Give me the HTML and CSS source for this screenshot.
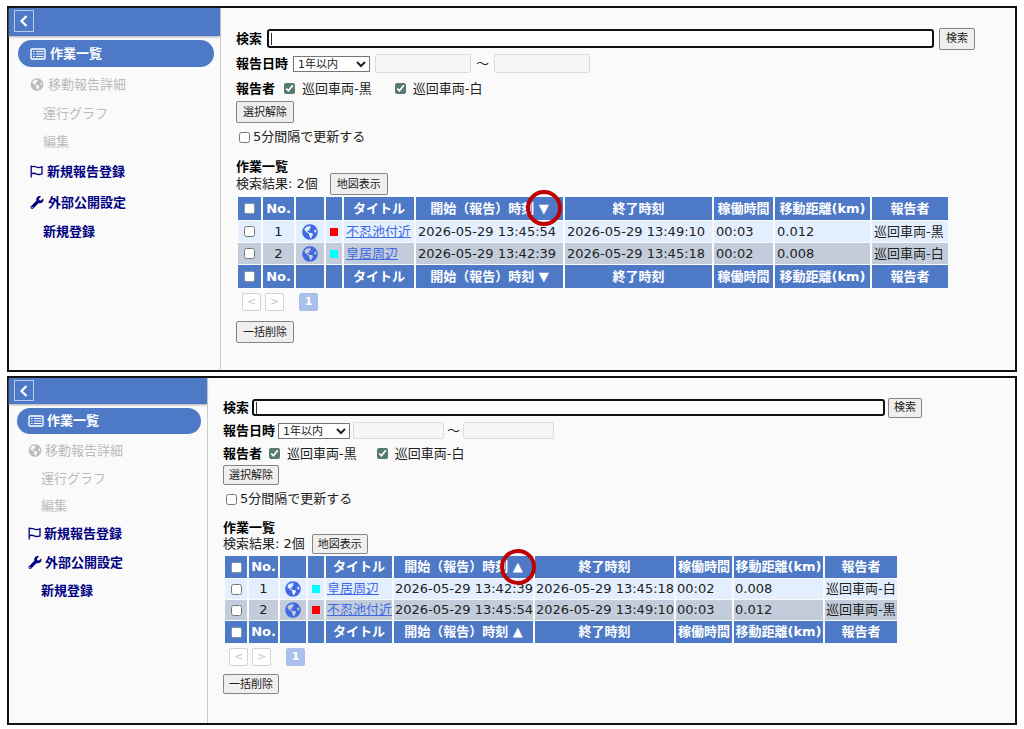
FILE: index.html
```html
<!DOCTYPE html>
<html lang="ja">
<head>
    <meta charset="UTF-8">
    <meta name="viewport" content="width=device-width, initial-scale=1.0">
    <title>作業一覧</title>
    <link rel="stylesheet" href="styles.css">
</head>
<body>
    <svg class="sprite" aria-hidden="true">
        <symbol id="i-back" viewBox="0 0 12 12"><path d="M8.500 1 3.500 6l5 5" fill="none" stroke="currentColor" stroke-width="2.2"/></symbol>
        <symbol id="i-list" viewBox="0 0 16 12"><rect x="1" y="1" width="14" height="10" rx="1" fill="none" stroke="currentColor" stroke-width="1.4"/><path d="M3 3.5h1.6M6 3.5h7.5M3 6h1.6M6 6h7.5M3 8.5h1.6M6 8.5h7.5" stroke="currentColor" stroke-width="1.2"/></symbol>
        <symbol id="i-globe" viewBox="0 0 496 512"><path fill="currentColor" d="M248 8C111.03 8 0 119.03 0 256s111.03 248 248 248 248-111.03 248-248S384.97 8 248 8zm82.29 357.6c-3.9 3.88-7.99 7.95-11.31 11.28-2.99 3-5.1 6.7-6.17 10.71-1.51 5.66-2.73 11.38-4.77 16.87l-17.39 46.85c-13.76 3-28 4.69-42.65 4.69v-27.38c1.69-12.62-7.64-36.26-22.63-51.25-6-6-9.37-14.14-9.37-22.63v-32.01c0-11.64-6.27-22.34-16.46-27.97-14.37-7.95-34.81-19.06-48.81-26.11-11.48-5.78-22.1-13.14-31.65-21.75l-.8-.72a114.792 114.792 0 0 1-18.06-20.74c-9.38-13.77-24.66-36.42-34.59-51.14 20.47-45.5 57.36-82.04 103.2-101.89l24.01 12.01C203.48 89.74 216 82.01 216 70.11v-11.3c7.99-1.29 16.12-2.11 24.39-2.42l28.3 28.3c6.25 6.25 6.25 16.38 0 22.63L264 112l-10.34 10.34c-3.12 3.12-3.12 8.19 0 11.31l4.69 4.69c3.12 3.12 3.12 8.19 0 11.31l-8 8a8.008 8.008 0 0 1-5.66 2.34h-8.99c-2.08 0-4.08.81-5.58 2.27l-9.92 9.65a8.008 8.008 0 0 0-1.58 9.31l15.59 31.19c2.66 5.32-1.21 11.58-7.15 11.58h-5.64c-1.93 0-3.79-.7-5.24-1.96l-9.28-8.06a16.017 16.017 0 0 0-15.55-3.1l-31.17 10.39a11.95 11.95 0 0 0-8.17 11.34c0 4.53 2.56 8.66 6.61 10.69l11.08 5.54c9.41 4.71 19.79 7.16 30.31 7.16s22.59 27.29 32 32h66.75c8.49 0 16.62 3.37 22.63 9.37l13.69 13.69a30.503 30.503 0 0 1 8.93 21.57 46.536 46.536 0 0 1-13.72 32.98zM417 274.25c-5.79-1.45-10.84-5-14.15-9.97l-17.98-26.97a23.97 23.97 0 0 1 0-26.62l19.59-29.38c2.32-3.47 5.5-6.29 9.24-8.15l12.98-6.49C440.2 193.59 448 223.87 448 256c0 8.67-.74 17.16-1.82 25.54L417 274.25z"/></symbol>
        <symbol id="i-flag" viewBox="0 0 13 13"><path d="M1.2 0.5v12M1.2 2c2.2-1.4 3.6-.7 5 0s3 1 5.8-.2v7c-2.8 1.2-4.4.8-5.8.1s-2.8-1.2-5 .1" fill="none" stroke="currentColor" stroke-width="1.3"/></symbol>
        <symbol id="i-wrench" viewBox="0 0 512 512"><path fill="currentColor" d="M507.73 109.1c-2.24-9.03-13.54-12.09-20.12-5.51l-74.36 74.36-67.88-11.31-11.31-67.88 74.36-74.36c6.62-6.62 3.43-17.9-5.66-20.16-47.38-11.74-99.55.91-136.58 37.93-39.64 39.64-50.55 97.1-34.05 147.2L18.74 402.76c-24.99 24.99-24.99 65.51 0 90.5 24.99 24.99 65.51 24.99 90.5 0l213.21-213.21c50.12 16.71 107.47 5.68 147.37-34.22 37.07-37.07 49.7-89.32 37.91-136.73zM64 472c-13.25 0-24-10.75-24-24 0-13.26 10.75-24 24-24s24 10.74 24 24c0 13.25-10.75 24-24 24z"/></symbol>
    </svg>

    <!-- 開始時刻の降順 -->
    <section class="panel desc">
        <nav class="side">
            <div class="side-head"><button type="button" class="back" aria-label="戻る"><svg><use href="#i-back"/></svg></button></div>
            <ul class="menu">
                <li class="active"><a href="#"><svg class="wide"><use href="#i-list"/></svg>作業一覧</a></li>
                <li class="off"><a href="#"><svg><use href="#i-globe"/></svg>移動報告詳細</a></li>
                <li class="sub off"><a href="#">運行グラフ</a></li>
                <li class="sub off"><a href="#">編集</a></li>
                <li><a href="#"><svg class="narrow"><use href="#i-flag"/></svg>新規報告登録</a></li>
                <li><a href="#"><svg><use href="#i-wrench"/></svg>外部公開設定</a></li>
                <li class="sub"><a href="#">新規登録</a></li>
            </ul>
        </nav>
        <main class="content">
            <form>
                <div class="row search">
                    <label for="q1">検索</label>
                    <input type="text" id="q1">
                    <button type="button">検索</button>
                </div>
                <div class="row">
                    <label for="term1">報告日時</label>
                    <select id="term1"><option>1年以内</option></select>
                    <input type="text" class="date" aria-label="開始日" disabled>
                    <span>～</span>
                    <input type="text" class="date" aria-label="終了日" disabled>
                </div>
                <div class="row">
                    <b>報告者</b>
                    <label class="who"><input type="checkbox" checked>巡回車両-黒</label>
                    <label class="who"><input type="checkbox" checked>巡回車両-白</label>
                </div>
                <button type="button">選択解除</button>
                <label class="auto"><input type="checkbox">5分間隔で更新する</label>
            </form>
            <h2>作業一覧</h2>
            <div class="result"><span>検索結果: 2個</span><button type="button">地図表示</button></div>
            <table>
                <colgroup><col class="c-check"><col class="c-no"><col class="c-map"><col class="c-mark"><col class="c-title"><col class="c-start"><col class="c-end"><col class="c-time"><col class="c-km"><col class="c-who"></colgroup>
                <thead>
                    <tr><th><input type="checkbox" aria-label="全選択"></th><th>No.</th><th></th><th></th><th>タイトル</th><th>開始（報告）時刻 <span class="sort circled">▼</span></th><th>終了時刻</th><th>稼働時間</th><th>移動距離(km)</th><th>報告者</th></tr>
                </thead>
                <tbody>
                    <tr><td><input type="checkbox" aria-label="1を選択"></td><td>1</td><td><svg class="globe"><use href="#i-globe"/></svg></td><td><i class="mark red"></i></td><td><a href="#">不忍池付近</a></td><td>2026-05-29 13:45:54</td><td>2026-05-29 13:49:10</td><td>00:03</td><td>0.012</td><td>巡回車両-黒</td></tr>
                    <tr><td><input type="checkbox" aria-label="2を選択"></td><td>2</td><td><svg class="globe"><use href="#i-globe"/></svg></td><td><i class="mark cyan"></i></td><td><a href="#">皇居周辺</a></td><td>2026-05-29 13:42:39</td><td>2026-05-29 13:45:18</td><td>00:02</td><td>0.008</td><td>巡回車両-白</td></tr>
                </tbody>
                <tfoot>
                    <tr><th><input type="checkbox" aria-label="全選択"></th><th>No.</th><th></th><th></th><th>タイトル</th><th>開始（報告）時刻 <span class="sort">▼</span></th><th>終了時刻</th><th>稼働時間</th><th>移動距離(km)</th><th>報告者</th></tr>
                </tfoot>
            </table>
            <div class="pager"><button type="button">&lt;</button><button type="button">&gt;</button><button type="button" class="now">1</button></div>
            <button type="button">一括削除</button>
        </main>
    </section>

    <!-- 開始時刻の昇順 -->
    <section class="panel asc">
        <nav class="side">
            <div class="side-head"><button type="button" class="back" aria-label="戻る"><svg><use href="#i-back"/></svg></button></div>
            <ul class="menu">
                <li class="active"><a href="#"><svg class="wide"><use href="#i-list"/></svg>作業一覧</a></li>
                <li class="off"><a href="#"><svg><use href="#i-globe"/></svg>移動報告詳細</a></li>
                <li class="sub off"><a href="#">運行グラフ</a></li>
                <li class="sub off"><a href="#">編集</a></li>
                <li><a href="#"><svg class="narrow"><use href="#i-flag"/></svg>新規報告登録</a></li>
                <li><a href="#"><svg><use href="#i-wrench"/></svg>外部公開設定</a></li>
                <li class="sub"><a href="#">新規登録</a></li>
            </ul>
        </nav>
        <main class="content">
            <form>
                <div class="row search">
                    <label for="q2">検索</label>
                    <input type="text" id="q2">
                    <button type="button">検索</button>
                </div>
                <div class="row">
                    <label for="term2">報告日時</label>
                    <select id="term2"><option>1年以内</option></select>
                    <input type="text" class="date" aria-label="開始日" disabled>
                    <span>～</span>
                    <input type="text" class="date" aria-label="終了日" disabled>
                </div>
                <div class="row">
                    <b>報告者</b>
                    <label class="who"><input type="checkbox" checked>巡回車両-黒</label>
                    <label class="who"><input type="checkbox" checked>巡回車両-白</label>
                </div>
                <button type="button">選択解除</button>
                <label class="auto"><input type="checkbox">5分間隔で更新する</label>
            </form>
            <h2>作業一覧</h2>
            <div class="result"><span>検索結果: 2個</span><button type="button">地図表示</button></div>
            <table>
                <colgroup><col class="c-check"><col class="c-no"><col class="c-map"><col class="c-mark"><col class="c-title"><col class="c-start"><col class="c-end"><col class="c-time"><col class="c-km"><col class="c-who"></colgroup>
                <thead>
                    <tr><th><input type="checkbox" aria-label="全選択"></th><th>No.</th><th></th><th></th><th>タイトル</th><th>開始（報告）時刻 <span class="sort circled">▲</span></th><th>終了時刻</th><th>稼働時間</th><th>移動距離(km)</th><th>報告者</th></tr>
                </thead>
                <tbody>
                    <tr><td><input type="checkbox" aria-label="1を選択"></td><td>1</td><td><svg class="globe"><use href="#i-globe"/></svg></td><td><i class="mark cyan"></i></td><td><a href="#">皇居周辺</a></td><td>2026-05-29 13:42:39</td><td>2026-05-29 13:45:18</td><td>00:02</td><td>0.008</td><td>巡回車両-白</td></tr>
                    <tr><td><input type="checkbox" aria-label="2を選択"></td><td>2</td><td><svg class="globe"><use href="#i-globe"/></svg></td><td><i class="mark red"></i></td><td><a href="#">不忍池付近</a></td><td>2026-05-29 13:45:54</td><td>2026-05-29 13:49:10</td><td>00:03</td><td>0.012</td><td>巡回車両-黒</td></tr>
                </tbody>
                <tfoot>
                    <tr><th><input type="checkbox" aria-label="全選択"></th><th>No.</th><th></th><th></th><th>タイトル</th><th>開始（報告）時刻 <span class="sort">▲</span></th><th>終了時刻</th><th>稼働時間</th><th>移動距離(km)</th><th>報告者</th></tr>
                </tfoot>
            </table>
            <div class="pager"><button type="button">&lt;</button><button type="button">&gt;</button><button type="button" class="now">1</button></div>
            <button type="button">一括削除</button>
        </main>
    </section>
</body>
</html>
```
FILE: styles.css
```css
*, *::after { box-sizing: border-box; }
body {
    margin: 0;
    padding: 6px 7px 4px;
    min-height: 100vh;
    display: grid;
    grid-template-rows: 366fr 349fr;
    gap: 4px;
    background: #fff;
    color: #222;
    font: 13px/18px "DejaVu Sans", "Noto Sans CJK JP", sans-serif;
}
.sprite { display: none; }

.panel { display: flex; border: 2px solid #111; background: #fafafa; }
.desc {
    --side: 212px; --head: 28px; --pill: 27px; --item: 31px; --sub: 28px; --indent: 9px;
    --btn: 22px; --btn-pad: 6px; --line: 25px; --gap: 15px; --top: 18px; --right: 40px;
    --space: 5px; --who: 14px; --map: 12px; --pager: 10px;
    --date: 96px; --select: 77px; --input: 19px; --th: 23px; --td: 21px; --cell: 2px; --table: 712px;
}
.asc {
    --side: 199px; --head: 26px; --pill: 26px; --item: 29px; --sub: 27px; --indent: 8px;
    --btn: 20px; --btn-pad: 5px; --line: 23px; --gap: 14px; --top: 18px; --right: 93px;
    --space: 3px; --who: 13px; --map: 7px; --pager: 8px;
    --date: 91px; --select: 72px; --input: 17px; --th: 22px; --td: 20px; --cell: 1px; --table: 675px;
}

/* side menu */
.side { flex: none; width: var(--side); border-right: 1px solid #ccc; }
.side-head { height: var(--head); padding: 2px 5px; background: #4d79c7; box-shadow: 0 1px 2px #aaa; }
.back {
    display: block; width: 20px; height: 22px; padding: 4px 3px;
    border: 1px solid #b8cbed; border-radius: 0; background: none; color: #fff;
}
.asc .back { height: 21px; }
.back svg { display: block; width: 12px; height: 12px; }
.menu { list-style: none; margin: 0; padding: 4px 6px 0 var(--indent); }
.menu a {
    display: flex; align-items: center; height: var(--item); padding-left: 12px; gap: 4px;
    color: #000080; font-weight: bold; text-decoration: none;
}
.menu svg { width: 14px; height: 13px; }
.menu .wide { width: 16px; height: 12px; }
.menu .narrow { width: 13px; }
.menu .sub a { height: var(--sub); padding-left: 25px; }
.menu .off a { color: #bbb; font-weight: normal; }
.menu .active a { height: var(--pill); margin-bottom: 2px; border-radius: 14px; background: #4d79c7; color: #fff; }
.asc .menu a { padding-left: 11px; gap: 3px; }
.asc .menu .sub a { padding-left: 24px; }

/* search form */
.content { flex: 1; padding: var(--top) var(--right) 0 15px; }
button {
    display: block; height: var(--btn); padding: 1px var(--btn-pad) 0;
    border: 1px solid #858585; border-radius: 2px; background: #efefef;
    color: #222; font: 11px/16px "DejaVu Sans", "Noto Sans CJK JP", sans-serif;
}
input[type="text"] { height: var(--input); border: 1px solid #ddd; border-radius: 2px; padding: 0 4px; background: #f6f6f6; }
input[type="checkbox"] { width: 11px; height: 11px; margin: 0; accent-color: #557c6f; }
.row { display: flex; align-items: center; gap: var(--space); height: var(--line); }
.row > label:first-child, .row b { color: #000; font-weight: bold; white-space: nowrap; }
.search input[type="text"] {
    flex: 1; border: 2px solid #111; border-radius: 3px;
    background: #fff linear-gradient(#333, #333) 2px center / 1px 12px no-repeat;
}
.date { width: var(--date); }
select {
    width: var(--select); height: 16px; padding: 0; border: 1px solid #767676; border-radius: 0;
    background: #fff; color: #222; font: 11px/14px "DejaVu Sans", "Noto Sans CJK JP", sans-serif;
}
.row .who { display: flex; align-items: center; gap: 7px; margin: 0 var(--who) 0 4px; font-weight: normal; color: #222; }
.auto { display: flex; align-items: center; gap: 3px; height: 18px; margin: 5px 0 0 3px; }
h2 { margin: var(--gap) 0 0; height: 12px; color: #000; font-size: 13px; line-height: 12px; }
.result { display: flex; align-items: center; gap: var(--map); }

/* list */
table { table-layout: fixed; width: var(--table); margin-top: 1px; border-spacing: 2px 1px; }
th, td { padding: 0 var(--cell); white-space: nowrap; line-height: 18px; }
th { height: var(--th); background: #4d79c7; color: #fff; font-weight: bold; text-align: center; }
td { height: var(--td); background: #e3efff; }
tbody tr:nth-child(2) td { background: #c3ccda; }
td:nth-child(-n+4) { text-align: center; }
table input[type="checkbox"] { display: block; margin: 0 auto; }
th input[type="checkbox"] { appearance: none; border: 1px solid #8a94a8; border-radius: 2px; background: #fff; }
td a { color: #4169e1; }
.c-check { width: 23px; }
.c-no { width: 31px; }
.c-map { width: 28px; }
.c-mark { width: 16px; }
.c-title { width: 70px; }
.c-start, .c-end { width: 147px; }
.c-time { width: 59px; }
.c-km { width: 95px; }
.c-who { width: 76px; }
.asc .c-check { width: 22px; }
.asc .c-no { width: 29px; }
.asc .c-map { width: 26px; }
.asc .c-title { width: 66px; }
.asc .c-start, .asc .c-end { width: 139px; }
.asc .c-time { width: 56px; }
.asc .c-km { width: 89px; }
.asc .c-who { width: 72px; }
.globe { display: block; width: 16px; height: 16px; margin: 0 auto; color: #4169e1; }
.mark { display: block; width: 8px; height: 8px; margin: 0 auto; }
.red { background: #f00; }
.cyan { background: #0ff; }
.sort { position: relative; }
.circled::after {
    content: ""; position: absolute; left: 50%; top: 50%; width: 36px; height: 36px; margin: -18px;
    border: 4px solid #c00000; border-radius: 50%;
}

.pager { display: flex; gap: 4px; margin: 4px 0 var(--pager) 6px; }
.pager button { width: 19px; height: 18px; padding: 0; border-color: #d3d3d3; background: #fff; color: #c4c4c4; }
.pager .now { margin-left: 11px; border-color: #a9c0ec; background: #a9c0ec; color: #fff; font-weight: bold; }
```
